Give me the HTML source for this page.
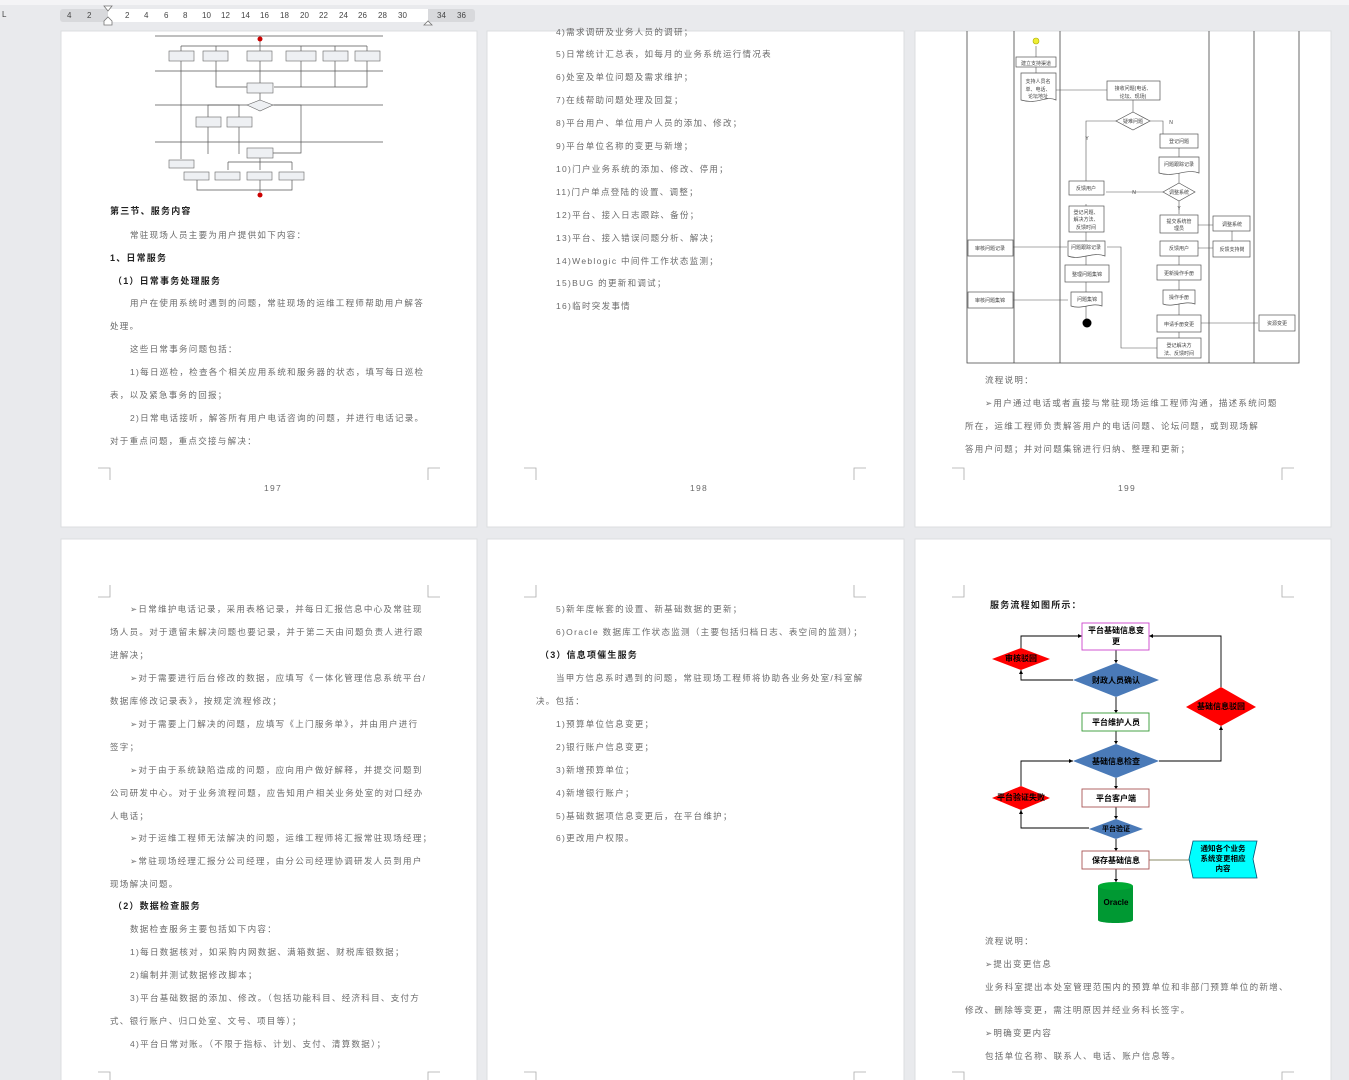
<!DOCTYPE html>
<html><head><meta charset="utf-8"><style>
html,body{margin:0;padding:0;background:#e9eaed;}
svg{display:block}
.t{font-family:"Liberation Sans","Noto Sans CJK SC",sans-serif;font-size:8.5px;fill:#6a6a6a;letter-spacing:1.3px}
.b{font-family:"Liberation Sans","Noto Sans CJK SC",sans-serif;font-size:9px;fill:#222;font-weight:bold;letter-spacing:1.2px}
.r{font-family:"Liberation Sans",sans-serif;font-size:8px;fill:#444}
.f{font-family:"Liberation Sans","Noto Sans CJK SC",sans-serif;font-size:8px;fill:#000;font-weight:bold;text-anchor:middle}
.s{font-family:"Liberation Sans","Noto Sans CJK SC",sans-serif;font-size:5px;fill:#444;text-anchor:middle}
</style></head><body>
<svg width="1349" height="1080" viewBox="0 0 1349 1080" xmlns="http://www.w3.org/2000/svg">
<rect width="1349" height="1080" fill="#e9eaed"/>
<!-- ruler -->
<rect x="0" y="0" width="1349" height="5" fill="#f4f4f6"/>
<text x="2" y="17" class="r" font-size="7">L</text>
<rect x="60" y="9" width="415" height="13" rx="3" fill="#d8d9dc"/>
<rect x="108" y="9" width="320" height="13" fill="#fff"/>
<g class="r">
<text x="67" y="18">4</text><text x="87" y="18">2</text>
<text x="125" y="18">2</text><text x="144" y="18">4</text><text x="164" y="18">6</text><text x="183" y="18">8</text>
<text x="202" y="18">10</text><text x="221" y="18">12</text><text x="241" y="18">14</text><text x="260" y="18">16</text><text x="280" y="18">18</text><text x="300" y="18">20</text><text x="319" y="18">22</text><text x="339" y="18">24</text><text x="358" y="18">26</text><text x="378" y="18">28</text><text x="398" y="18">30</text>
<text x="437" y="18">34</text><text x="457" y="18">36</text>
</g>
<path d="M104 6h8l-4 5z" fill="#fff" stroke="#777" stroke-width="0.8"/>
<path d="M104 21l4-4 4 4v4h-8z" fill="#fff" stroke="#777" stroke-width="0.8"/>
<path d="M424 25l4-4 4 4z" fill="#fff" stroke="#777" stroke-width="0.8"/>

<!-- pages -->
<g fill="#fff" stroke="#dcdde0" stroke-width="1">
<rect x="61" y="31" width="416" height="496"/>
<rect x="487" y="31" width="417" height="496"/>
<rect x="915" y="31" width="416" height="496"/>
<rect x="61" y="539" width="416" height="550"/>
<rect x="487" y="539" width="417" height="550"/>
<rect x="915" y="539" width="416" height="550"/>
</g>
<!-- corner marks -->
<g stroke="#aaa" stroke-width="0.8" fill="none">
<path d="M98 468h12v12M440 468h-12v12"/>
<path d="M524 468h12v12M866 468h-12v12"/>
<path d="M952 468h12v12M1294 468h-12v12"/>
<path d="M98 597h12v-12M440 597h-12v-12"/>
<path d="M524 597h12v-12M866 597h-12v-12"/>
<path d="M952 597h12v-12M1294 597h-12v-12"/>
<path d="M98 1072h12v12M440 1072h-12v12M524 1072h12v12M866 1072h-12v12M952 1072h12v12M1294 1072h-12v12"/>
</g>
<g class="t" font-size="5" fill="#bbb"><text x="264" y="491">197</text><text x="690" y="491">198</text><text x="1118" y="491">199</text></g>

<!-- page1 flowchart -->
<g stroke="#555" stroke-width="0.7" fill="none">
<path d="M155 36h228M155 71h228M155 105h228M155 142h228"/>
<path d="M181 46h186M181 46v5M216 46v5M260 40v11M301 46v5M335 46v5M367 46v5"/>
<path d="M181 61v98M216 61v26h44M260 61v22M301 61v26h-27M335 61v26M367 61v26h-93"/>
<path d="M260 93v7M236 105h-28v12M236 105h3v12M274 105h27v48h-28M208 127v27M239 127v27"/>
<path d="M260 158v4M228 162h64M228 162v8M260 162v8M292 162v8M260 180v12M197 180v10h95v-10"/>
</g>
<g fill="#eef0f3" stroke="#666" stroke-width="0.6">
<rect x="169" y="51" width="25" height="10"/><rect x="203" y="51" width="25" height="10"/><rect x="247" y="51" width="25" height="10"/><rect x="286" y="51" width="30" height="10"/><rect x="323" y="51" width="25" height="10"/><rect x="355" y="51" width="25" height="10"/>
<rect x="247" y="83" width="26" height="10"/>
<path d="M260 100l13 5-13 6-13-6z"/>
<rect x="196" y="117" width="25" height="10"/><rect x="227" y="117" width="25" height="10"/>
<rect x="247" y="148" width="26" height="10"/>
<rect x="169" y="160" width="25" height="8"/>
<rect x="184" y="172" width="25" height="8"/><rect x="215" y="172" width="25" height="8"/><rect x="247" y="172" width="25" height="8"/><rect x="279" y="172" width="25" height="8"/>
</g>
<circle cx="260" cy="39" r="2.5" fill="#c00"/><circle cx="260" cy="195" r="2.5" fill="#c00"/>

<!-- page1 text -->
<text x="110" y="214" class="b">第三节、服务内容</text>
<text x="130" y="238" class="t">常驻现场人员主要为用户提供如下内容：</text>
<text x="110" y="261" class="b">1、日常服务</text>
<text x="113" y="284" class="b" font-size="8.5">（1）日常事务处理服务</text>
<text x="130" y="306" class="t">用户在使用系统时遇到的问题，常驻现场的运维工程师帮助用户解答</text>
<text x="110" y="329" class="t">处理。</text>
<text x="130" y="352" class="t">这些日常事务问题包括：</text>
<text x="130" y="375" class="t">1)每日巡检，检查各个相关应用系统和服务器的状态，填写每日巡检</text>
<text x="110" y="398" class="t">表，以及紧急事务的回报；</text>
<text x="130" y="421" class="t">2)日常电话接听，解答所有用户电话咨询的问题，并进行电话记录。</text>
<text x="110" y="444" class="t">对于重点问题，重点交接与解决：</text>

<!-- page2 text -->
<g class="t">
<text x="556" y="35">4)需求调研及业务人员的调研；</text>
<text x="556" y="57">5)日常统计汇总表，如每月的业务系统运行情况表</text>
<text x="556" y="80">6)处室及单位问题及需求维护；</text>
<text x="556" y="103">7)在线帮助问题处理及回复；</text>
<text x="556" y="126">8)平台用户、单位用户人员的添加、修改；</text>
<text x="556" y="149">9)平台单位名称的变更与新增；</text>
<text x="556" y="172">10)门户业务系统的添加、修改、停用；</text>
<text x="556" y="195">11)门户单点登陆的设置、调整；</text>
<text x="556" y="218">12)平台、接入日志跟踪、备份；</text>
<text x="556" y="241">13)平台、接入错误问题分析、解决；</text>
<text x="556" y="264">14)Weblogic 中间件工作状态监测；</text>
<text x="556" y="286">15)BUG 的更新和调试；</text>
<text x="556" y="309">16)临时突发事情</text>
</g>

<!-- page3 swimlane -->
<g stroke="#444" stroke-width="0.8" fill="none">
<path d="M967 31v332h332V31M1014 31v332M1060 31v332M1209 31v332M1254 31v332"/>
</g>
<g stroke="#555" stroke-width="0.6" fill="none">
<path d="M1036 46v11M1036 67v6M1053 90h57M1133 100v12M1149 121h14v13M1116 121h-30v68M1179 148v9M1179 173v10M1163 192h-57M1179 201v13M1195 225h18M1232 231v10M1213 248h-17M1179 256v12M1179 280v10M1179 303v12M1196 323h62M1179 332v9M1159 348h-38v-101h-14M1086 204v6M1086 232v9M1013 247h54M1086 256v10M1086 282v10M1013 300h55M1086 306v14"/>
</g>
<g fill="#fff" stroke="#555" stroke-width="0.7">
<rect x="1016" y="57" width="40" height="10"/>
<path d="M1021 73h35v27c-10-5-18 5-35 0z"/>
<rect x="1107" y="81" width="53" height="19"/>
<path d="M1133 112l17 9-17 9-17-9z"/>
<rect x="1160" y="134" width="38" height="14"/>
<path d="M1159 157h40v16c-12-5-25 5-40 0z"/>
<path d="M1179 183l16 9-16 9-16-9z"/>
<rect x="1069" y="181" width="35" height="14"/>
<rect x="1069" y="206" width="35" height="26"/>
<rect x="1160" y="215" width="38" height="18"/>
<rect x="1213" y="216" width="37" height="15"/>
<path d="M1068 241h37v15c-12-5-25 5-37 0z"/>
<rect x="1160" y="241" width="38" height="15"/>
<rect x="1213" y="241" width="37" height="16"/>
<rect x="968" y="240" width="45" height="16"/>
<rect x="1065" y="265" width="44" height="17"/>
<rect x="1157" y="265" width="44" height="15"/>
<path d="M1163 290h32v14c-10-4-22 4-32 0z"/>
<rect x="968" y="292" width="45" height="16"/>
<path d="M1071 292h31v14c-10-4-20 4-31 0z"/>
<rect x="1157" y="315" width="44" height="17"/>
<rect x="1259" y="315" width="36" height="16"/>
<rect x="1157" y="338" width="44" height="20"/>
</g>
<circle cx="1036" cy="41" r="3" fill="#ee3" stroke="#aa0" stroke-width="0.6"/>
<circle cx="1087" cy="323" r="4.5" fill="#000"/>
<g class="s">
<text x="1036" y="65">建立支持渠道</text><text x="1038" y="83">支持人员名</text><text x="1038" y="91">单、电话、</text><text x="1038" y="98">论坛地址</text>
<text x="1133" y="90">接收问题(电话、</text><text x="1133" y="98">论坛、现场)</text><text x="1133" y="123">疑难问题</text>
<text x="1179" y="143">登记问题</text><text x="1179" y="166">问题跟踪记录</text><text x="1179" y="194">调整系统</text>
<text x="1086" y="190">反馈用户</text><text x="1086" y="214">登记问题、</text><text x="1086" y="221">解决方法、</text><text x="1086" y="229">反馈时间</text>
<text x="1179" y="223">提交系统管</text><text x="1179" y="230">理员</text><text x="1232" y="226">调整系统</text>
<text x="1086" y="249">问题跟踪记录</text><text x="1179" y="250">反馈用户</text><text x="1232" y="251">反馈支持岗</text>
<text x="990" y="250">审核问题记录</text><text x="1087" y="276">整理问题集锦</text><text x="1179" y="275">更新操作手册</text>
<text x="1179" y="299">操作手册</text><text x="990" y="302">审核问题集锦</text><text x="1087" y="301">问题集锦</text>
<text x="1179" y="326">申请手册变更</text><text x="1277" y="325">资源变更</text>
<text x="1179" y="347">登记解决方</text><text x="1179" y="355">法、反馈时间</text>
<text x="1087" y="140">Y</text><text x="1171" y="124">N</text><text x="1134" y="194">N</text><text x="1179" y="210">Y</text>
</g>
<g class="t">
<text x="985" y="383">流程说明：</text>
<text x="985" y="406">➢用户通过电话或者直接与常驻现场运维工程师沟通，描述系统问题</text>
<text x="965" y="429">所在，运维工程师负责解答用户的电话问题、论坛问题，或到现场解</text>
<text x="965" y="452">答用户问题；并对问题集锦进行归纳、整理和更新；</text>
</g>

<!-- page4 text -->
<g class="t">
<text x="130" y="612">➢日常维护电话记录，采用表格记录，并每日汇报信息中心及常驻现</text>
<text x="110" y="635">场人员。对于遗留未解决问题也要记录，并于第二天由问题负责人进行跟</text>
<text x="110" y="658">进解决；</text>
<text x="130" y="681">➢对于需要进行后台修改的数据，应填写《一体化管理信息系统平台/</text>
<text x="110" y="704">数据库修改记录表》，按规定流程修改；</text>
<text x="130" y="727">➢对于需要上门解决的问题，应填写《上门服务单》，并由用户进行</text>
<text x="110" y="750">签字；</text>
<text x="130" y="773">➢对于由于系统缺陷造成的问题，应向用户做好解释，并提交问题到</text>
<text x="110" y="796">公司研发中心。对于业务流程问题，应告知用户相关业务处室的对口经办</text>
<text x="110" y="819">人电话；</text>
<text x="130" y="841">➢对于运维工程师无法解决的问题，运维工程师将汇报常驻现场经理；</text>
<text x="130" y="864">➢常驻现场经理汇报分公司经理，由分公司经理协调研发人员到用户</text>
<text x="110" y="887">现场解决问题。</text>
<text x="130" y="932">数据检查服务主要包括如下内容：</text>
<text x="130" y="955">1)每日数据核对，如采购内网数据、满箱数据、财税库银数据；</text>
<text x="130" y="978">2)编制并测试数据修改脚本；</text>
<text x="130" y="1001">3)平台基础数据的添加、修改。（包括功能科目、经济科目、支付方</text>
<text x="110" y="1024">式、银行账户、归口处室、文号、项目等）；</text>
<text x="130" y="1047">4)平台日常对账。（不限于指标、计划、支付、清算数据）；</text>
</g>
<text x="113" y="909" class="b" font-size="8.5">（2）数据检查服务</text>

<!-- page5 text -->
<g class="t">
<text x="556" y="612">5)新年度帐套的设置、新基础数据的更新；</text>
<text x="556" y="635">6)Oracle 数据库工作状态监测（主要包括归档日志、表空间的监测）；</text>
<text x="556" y="681">当甲方信息系时遇到的问题，常驻现场工程师将协助各业务处室/科室解</text>
<text x="536" y="704">决。包括：</text>
<text x="556" y="727">1)预算单位信息变更；</text>
<text x="556" y="750">2)银行账户信息变更；</text>
<text x="556" y="773">3)新增预算单位；</text>
<text x="556" y="796">4)新增银行账户；</text>
<text x="556" y="819">5)基础数据项信息变更后，在平台维护；</text>
<text x="556" y="841">6)更改用户权限。</text>
</g>
<text x="540" y="658" class="b" font-size="8.5">（3）信息项催生服务</text>

<!-- page6 flowchart -->
<text x="990" y="608" class="b" font-size="7" letter-spacing="0">服务流程如图所示：</text>
<g stroke="#000" stroke-width="0.9" fill="none">
<path d="M1116 650v13M1116 697v16M1116 731v13M1116 778v11M1116 807v12M1116 839v12M1116 869v13"/>
<path d="M1082 636h-61v12M1021 670v10h52"/>
<path d="M1159 761h62v-35M1221 687v-51h-72"/>
<path d="M1073 761h-52v25M1021 810v18h68"/>
</g>
<path d="M1149 860h40" stroke="#886" stroke-width="0.9"/>
<g fill="#000"><path d="M1082 636l-4-2v4zM1021 670l-2 4h4zM1221 726l-2 4h4zM1149 636l4-2v4zM1073 761l-4-2v4zM1021 810l-2 4h4zM1116 663l-2-3h4zM1116 713l-2-3h4zM1116 744l-2-3h4zM1116 789l-2-3h4zM1116 819l-2-3h4zM1116 851l-2-3h4zM1116 882l-2-3h4z"/></g>
<rect x="1082" y="623" width="67" height="27" fill="#fff" stroke="#c4c" stroke-width="0.9"/>
<rect x="1082" y="713" width="67" height="18" fill="#fff" stroke="#393" stroke-width="0.9"/>
<rect x="1082" y="789" width="67" height="18" fill="#fff" stroke="#a55" stroke-width="0.9"/>
<rect x="1082" y="851" width="67" height="18" fill="#fff" stroke="#a55" stroke-width="0.9"/>
<path d="M1116 663l43 17-43 17-43-17z" fill="#4a7ab8"/>
<path d="M1116 744l43 17-43 17-43-17z" fill="#4a7ab8"/>
<path d="M1116 819l27 10-27 10-27-10z" fill="#4a7ab8"/>
<path d="M1021 648l29 11-29 11-29-11z" fill="#f00"/>
<path d="M1021 786l29 12-29 12-29-12z" fill="#f00"/>
<path d="M1221 687l35 20-35 19-35-19z" fill="#f00"/>
<path d="M1193 841h64l-4 18 4 19h-64l-4-19z" fill="#0ff" stroke="#057" stroke-width="0.8"/>
<path d="M1098 886v34c0 4 35 4 35 0v-34z" fill="#093"/>
<ellipse cx="1115.5" cy="886" rx="17.5" ry="4" fill="#0a3"/>
<g class="f">
<text x="1116" y="633">平台基础信息变</text><text x="1116" y="644">更</text>
<text x="1116" y="725">平台维护人员</text><text x="1116" y="801">平台客户端</text><text x="1116" y="863">保存基础信息</text>
<text x="1223" y="851" font-size="7.5">通知各个业务</text><text x="1223" y="861" font-size="7.5">系统变更相应</text><text x="1223" y="871" font-size="7.5">内容</text>
</g>
<g class="f" font-weight="normal" fill="#234" font-size="7.5">
<text x="1116" y="683">财政人员确认</text><text x="1116" y="764">基础信息检查</text><text x="1116" y="831" font-size="7">平台验证</text>
</g>
<g class="f" font-size="6" fill="#600">
<text x="1021" y="661">审核驳回</text><text x="1021" y="800">平台验证失败</text><text x="1221" y="709">基础信息驳回</text>
</g>
<text x="1116" y="905" class="f" font-size="7" fill="#063" font-weight="normal">Oracle</text>
<g class="t">
<text x="985" y="944">流程说明：</text>
<text x="985" y="967">➢提出变更信息</text>
<text x="985" y="990">业务科室提出本处室管理范围内的预算单位和非部门预算单位的新增、</text>
<text x="965" y="1013">修改、删除等变更，需注明原因并经业务科长签字。</text>
<text x="985" y="1036">➢明确变更内容</text>
<text x="985" y="1059">包括单位名称、联系人、电话、账户信息等。</text>
</g>
</svg>
</body></html>
